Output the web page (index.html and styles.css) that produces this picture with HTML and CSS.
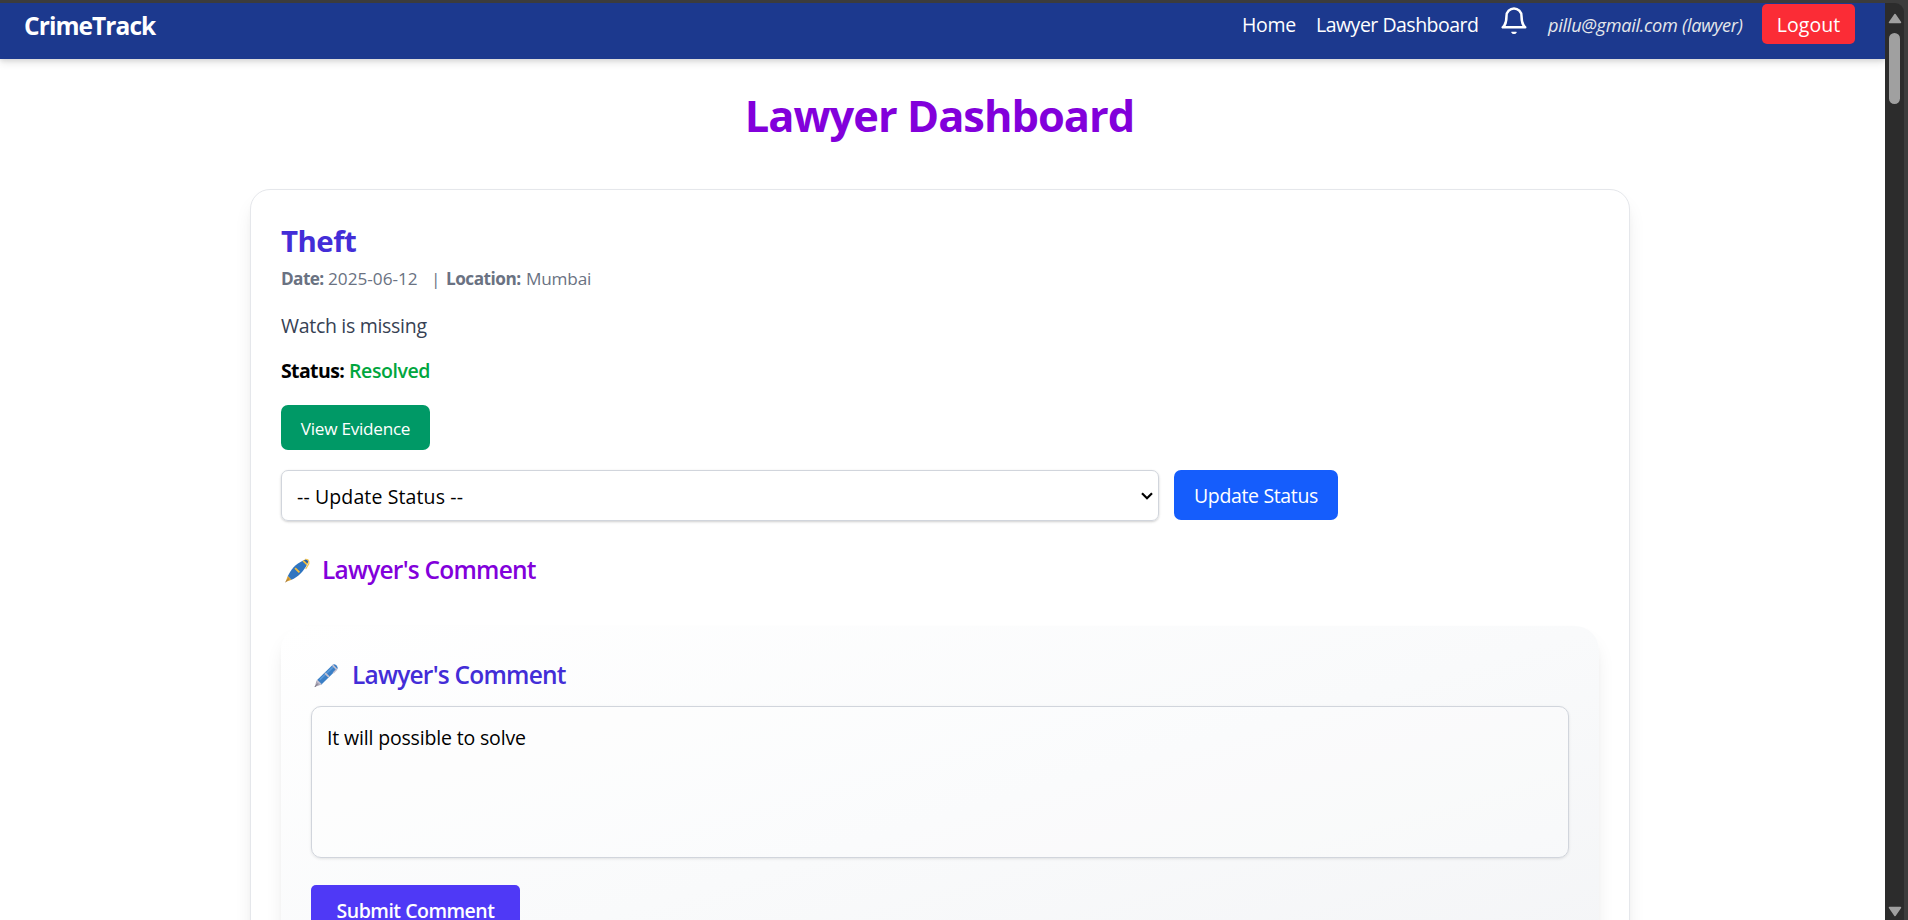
FILE: index.html
```html
<!DOCTYPE html>
<html lang="en">
<head>
<meta charset="utf-8">
<title>CrimeTrack</title>
<link rel="stylesheet" href="styles.css">
</head>
<body>
<div class="window">
  <div class="page">
    <nav class="nav">
      <span class="brand">CrimeTrack</span>
      <div class="nav-links">
        <a class="link-home">Home</a>
        <a class="link-dash">Lawyer Dashboard</a>
        <svg class="bell" viewBox="0 0 24 24" fill="none" stroke="#fff" stroke-width="2" stroke-linecap="round" stroke-linejoin="round"><path d="M18 8A6 6 0 0 0 6 8c0 7-3 9-3 9h18s-3-2-3-9"/><path d="M13.73 21a2 2 0 0 1-3.46 0z" fill="#fff" stroke-width="1"/></svg>
        <span class="user">pillu@gmail.com (lawyer)</span>
        <button class="logout">Logout</button>
      </div>
    </nav>
    <main class="main">
      <h1 class="title">Lawyer Dashboard</h1>
      <section class="card">
        <h2 class="case-title">Theft</h2>
        <p class="meta"><b class="date-label">Date:</b><span class="date">2025-06-12</span><span class="bar">|</span><b class="loc-label">Location:</b><span class="loc">Mumbai</span></p>
        <p class="desc">Watch is missing</p>
        <p class="status"><b>Status:</b><span class="resolved">Resolved</span></p>
        <button class="evidence">View Evidence</button>
        <div class="update-row">
          <div class="select"><span>-- Update Status --</span>
            <svg class="chevron" viewBox="0 0 12 8" fill="none" stroke="#000" stroke-width="2.2"><path d="M1 1.2l5 5 5-5"/></svg>
          </div>
          <button class="update">Update Status</button>
        </div>
        <h3 class="comment-head purple">
          <svg class="pen" viewBox="0 0 26 26"><path d="M.5 25l2.500-6.500L7 22.500z" fill="#e0a22e"/><path d="M3 18.800C5.500 12.500 11 6 19 2.500l4 4C19.500 14 13 20 6.800 22.700z" fill="#2f74bf"/><path d="M19 2.500l3-1.500 2.500 2.500-1.500 3z" fill="#285f9f"/><path d="M18.800 2.700l4.200 4.200M10.500 10.500l4.500 4.500" stroke="#f4bd3c" stroke-width="1.900"/><path d="M21 1.300Q25.500 1 24.800 6L21.500 11.500" fill="none" stroke="#f4c44e" stroke-width="1.200"/><path d="M.5 25l3.500-3.500" stroke="#8c7350" stroke-width="1"/></svg>
          <span>Lawyer's Comment</span>
        </h3>
        <div class="comment-card">
          <h3 class="comment-head indigo">
            <svg class="pen" viewBox="0 0 26 26"><path d="M.8 25l1.700-6.500L7 22.500z" fill="#a9a5b5"/><path d="M3 18L19.500 1.800Q21 .5 23.500 2.500 25.500 5 24 6.500L7.500 22.500z" fill="#3b7fc6"/><path d="M6 17.500L20.500 3.500" stroke="#5b9bdc" stroke-width="1.500"/><path d="M2.800 18.200l4.600 4.300M11.500 10.500l4 4M19.300 2.300l4.200 4.200" stroke="#c3bfce" stroke-width="1.800"/><path d="M23.800 6.500L20 10.500" stroke="#c3bfce" stroke-width="1.500"/><path d="M.8 25l3-3.500" stroke="#77727f" stroke-width="1"/></svg>
            <span>Lawyer's Comment</span>
          </h3>
          <div class="textarea">It will possible to solve</div>
          <button class="submit">Submit Comment</button>
        </div>
      </section>
    </main>
  </div>
  <div class="scrollbar">
    <svg class="arrow" viewBox="0 0 14 11"><path d="M7 1.500L12.500 9.500H1.500z" fill="#a0a0a0" stroke="#a0a0a0" stroke-width="1.500" stroke-linejoin="round"/></svg>
    <div class="thumb"></div>
    <svg class="arrow down" viewBox="0 0 14 11"><path d="M7 9.500L12.500 1.500H1.500z" fill="#a0a0a0" stroke="#a0a0a0" stroke-width="1.500" stroke-linejoin="round"/></svg>
  </div>
</div>
</body>
</html>
```
FILE: styles.css
```css
* { box-sizing: border-box; }
body { margin: 0; font-family: "Open Sans", "Noto Sans", sans-serif; font-size: 19.5px; line-height: 30px; color: #000; }
h1, h2, h3, p { margin: 0; }
button { border: 0; padding: 2px 0 0; font: inherit; color: #fff; text-align: center; display: block; white-space: nowrap; }
.window { height: 920px; overflow: hidden; background: #3c3c3c; padding: 3px 4px 0 0; display: flex; }
.page { width: 1885px; height: 917px; overflow: hidden; background: #fff; }

.nav { height: 56px; background: #1c398e; color: #fff; display: flex; justify-content: space-between; align-items: flex-start; padding: 1px 30px 0 24px; box-shadow: 0 4px 8px rgba(0,0,0,.1), 0 2px 4px rgba(0,0,0,.08); }
.brand { font-size: 24.5px; font-weight: 700; line-height: 35px; letter-spacing: -.93px; padding-top: 4px; }
.nav-links { display: flex; align-items: center; height: 40px; white-space: nowrap; }
.link-home { width: 74px; padding-top: 2px; letter-spacing: -.3px; }
.link-dash { width: 183px; padding-top: 2px; letter-spacing: -.5px; }
.bell { width: 30px; height: 30px; margin-bottom: 7px; }
.user { width: 214px; margin-left: 19px; padding-top: 2px; font-size: 18.2px; font-style: italic; letter-spacing: -.28px; color: #e5e7eb; }
.logout { width: 93px; height: 40px; background: #fb2c36; border-radius: 5px; letter-spacing: .1px; }

.main { width: 1380px; margin-left: 250px; padding-top: 32px; }
.title { font-size: 43.4px; line-height: 50px; letter-spacing: -.98px; color: #8200db; text-align: center; margin-bottom: 48px; padding-right: 1px; }
.card { height: 900px; padding: 31px 30px 30px; border: 1px solid #e5e7eb; border-radius: 20px; background: #fff; box-shadow: 0 12px 20px -4px rgba(0,0,0,.1), 0 5px 8px -5px rgba(0,0,0,.1); }
.case-title { font-size: 29.4px; line-height: 40px; letter-spacing: -.5px; color: #432dd7; }
.meta { display: flex; margin-top: 5px; font-size: 17.2px; line-height: 25px; color: #6a7282; white-space: nowrap; }
.date-label { width: 47px; letter-spacing: -.6px; }
.date { width: 103px; }
.bar { width: 15px; }
.loc-label { width: 80px; letter-spacing: -.5px; }
.loc { letter-spacing: -.2px; }
.desc { margin-top: 20px; letter-spacing: -.3px; color: #364153; }
.status { display: flex; margin-top: 15px; }
.status b { width: 68px; letter-spacing: -.62px; }
.resolved { font-weight: 600; letter-spacing: -.4px; color: #00a63e; }
.evidence { width: 149px; height: 45px; margin-top: 19px; background: #009966; border-radius: 7px; font-size: 17.2px; letter-spacing: -.28px; }
.update-row { display: flex; gap: 15px; margin-top: 20px; }
.select { width: 878px; height: 51px; padding: 0 5px 0 15px; border: 1px solid #d1d5dc; border-radius: 7px; box-shadow: 0 1px 3px rgba(0,0,0,.12), 0 1px 2px rgba(0,0,0,.08); display: flex; justify-content: space-between; align-items: center; letter-spacing: .12px; }
.select span { padding-top: 2px; }
.chevron { width: 12px; height: 8px; }
.update { width: 164px; height: 50px; background: #155dfc; border-radius: 7px; letter-spacing: -.35px; }
.comment-head { display: flex; font-size: 24.5px; line-height: 35px; font-weight: 600; letter-spacing: -.78px; }
.purple { color: #8200db; margin-top: 31px; }
.indigo { color: #432dd7; }
.pen { width: 25px; height: 25px; margin: 6px 11px 0 5px; }
.purple .pen { margin-left: 4px; margin-right: 12px; }
.indigo .pen { margin-left: 3px; margin-right: 13px; }

.comment-card { height: 385px; margin-top: 39px; padding: 31px 30px; border-radius: 24px; background: linear-gradient(to bottom right, #fff, #f9fafb 50%, #f3f4f6); box-shadow: 0 12px 20px -4px rgba(0,0,0,.1), 0 5px 8px -5px rgba(0,0,0,.08); }
.textarea { height: 152px; margin-top: 14px; padding: 16px 15px; border: 1px solid #d1d5dc; border-radius: 10px; letter-spacing: -.16px; box-shadow: 0 1px 3px rgba(0,0,0,.1); background: rgba(255,255,255,.25); }
.submit { width: 209px; height: 50px; margin-top: 27px; padding-top: 2px; background: #4f39f6; border-radius: 5px; font-weight: 650; letter-spacing: -.5px; }

.scrollbar { width: 19px; height: 917px; background: #2c2c2c; border-top-right-radius: 9px; display: flex; flex-direction: column; align-items: center; padding: 10px 0 3px; }
.arrow { width: 14px; height: 11px; }
.thumb { width: 11px; height: 71px; margin-top: 9px; border-radius: 6px; background: #a0a0a0; }
.down { margin-top: auto; }
```
